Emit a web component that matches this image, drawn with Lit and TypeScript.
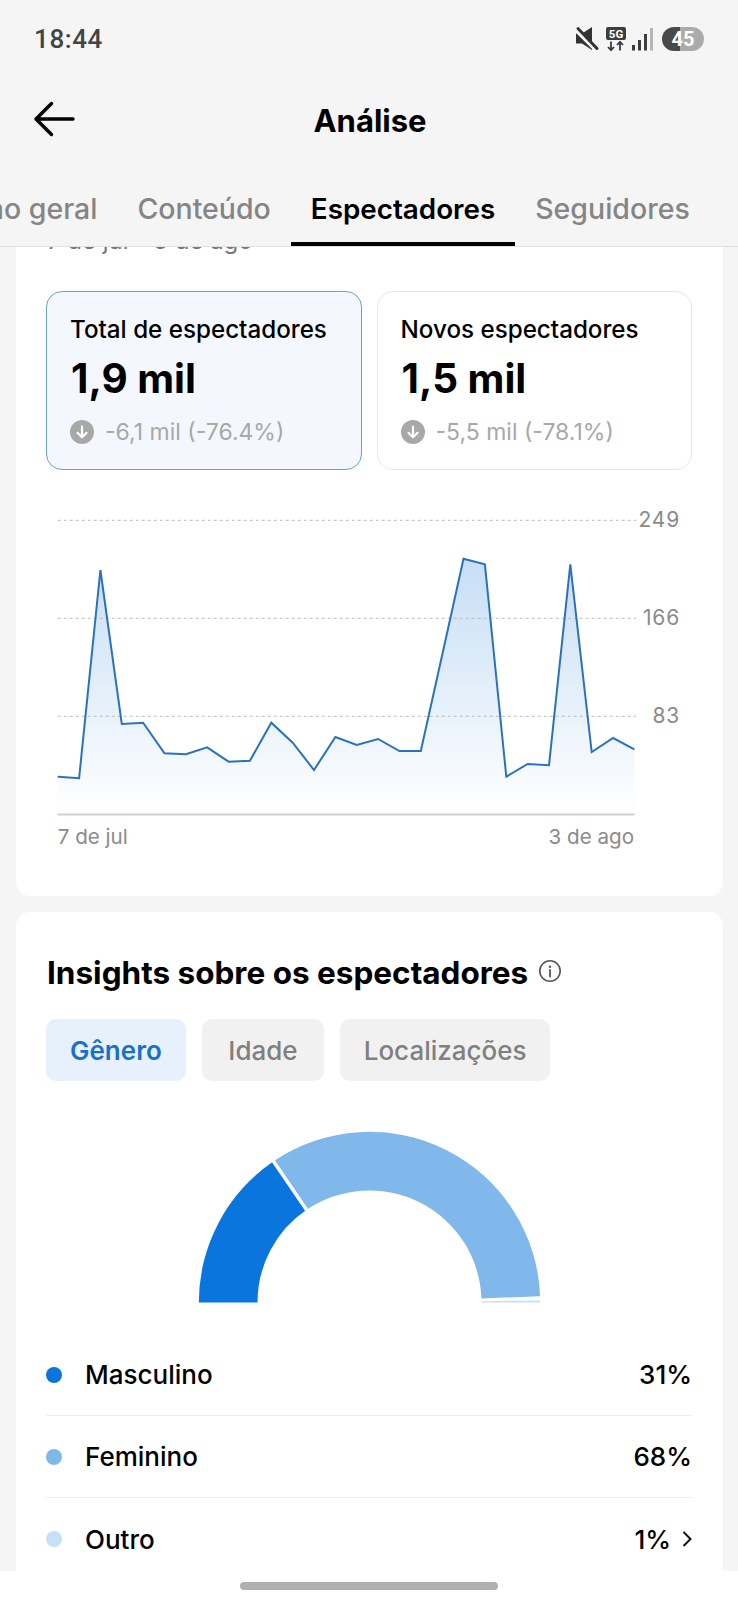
import { LitElement, html, css, svg } from "lit";
import { customElement } from "lit/decorators.js";

const TOP = [776.7, 778.3, 570, 724, 722.7, 753.3, 754.3, 747.3, 761.7, 760.7, 722.7, 742.7, 770, 737, 745, 739, 751, 751, 655, 558.7, 564.3, 776.7, 764, 765.3, 564.3, 752, 738, 749.3];
const X0 = 57.7;
const STEP = 21.36;
const BASE = 814;
const CX = 369.5;
const CY = 1302.5;
const R = 170.7;
const IR = 112;

function pt(r: number, a: number) {
  const t = (a * Math.PI) / 180;
  return `${(CX - r * Math.cos(t)).toFixed(2)} ${(CY - r * Math.sin(t)).toFixed(2)}`;
}
function arc(a: number, b: number) {
  return `M${pt(R, a)} A${R} ${R} 0 0 1 ${pt(R, b)} L${pt(IR, b)} A${IR} ${IR} 0 0 0 ${pt(IR, a)} Z`;
}
function sep(a: number) {
  return `M${pt(IR - 2, a)} L${pt(R + 2, a)}`;
}

@customElement("app-root")
export class AppRoot extends LitElement {
  static styles = css`
    :host {
      display: block;
      width: 738px;
      height: 1600px;
      font-family: Inter, "Noto Sans", sans-serif;
      color: #000;
    }
    .page {
      width: 738px;
      height: 1600px;
      background: #f5f5f5;
      display: flex;
      flex-direction: column;
      overflow: hidden;
    }
    .status {
      height: 78px;
      flex: none;
      display: flex;
      align-items: center;
      justify-content: space-between;
      padding: 0 34px;
      box-sizing: border-box;
    }
    .time {
      font-family: Roboto, sans-serif;
      font-size: 26px;
      font-weight: 500;
      color: #444;
      letter-spacing: 0.6px;
    }
    .sicons { display: block; }
    .header {
      height: 82px;
      flex: none;
      display: flex;
      align-items: center;
      justify-content: center;
      position: relative;
      padding: 2px 0 0 2px;
      box-sizing: border-box;
    }
    .back {
      position: absolute;
      left: 33px;
      top: 23px;
    }
    .title {
      font-size: 31px;
      font-weight: 700;
    }
    .tabs {
      height: 87px;
      flex: none;
      box-sizing: border-box;
      border-bottom: 1px solid #e0e0e0;
      display: flex;
      overflow: hidden;
      margin-left: -75px;
      width: 813px;
    }
    .tab {
      flex: none;
      padding: 15px 20px 0;
      height: 86px;
      box-sizing: border-box;
      display: flex;
      align-items: center;
      font-size: 28.5px;
      font-weight: 500;
      color: #858585;
      border-bottom: 4px solid transparent;
    }
    .tab.on {
      color: #000;
      font-size: 27.8px;
      font-weight: 600;
      border-bottom-color: #000;
    }
    .scroll {
      height: 1324px;
      flex: none;
      overflow: hidden;
      display: flex;
      flex-direction: column;
      gap: 16px;
    }
    .card {
      flex: none;
      width: 707px;
      margin-left: 16px;
      background: #fff;
      box-sizing: border-box;
      padding: 0 31px 0 30px;
      border-radius: 14px;
    }
    .c1 {
      margin-top: -21px;
      height: 670px;
      border-radius: 0 0 14px 14px;
    }
    .range {
      font-size: 24px;
      line-height: 30px;
      color: #777;
      margin-bottom: 35px;
      padding-left: 1px;
    }
    .metrics {
      display: grid;
      grid-template-columns: 1fr 1fr;
      gap: 15px;
    }
    .metric {
      height: 179px;
      box-sizing: border-box;
      border: 1px solid #e8e8e8;
      border-radius: 16px;
      padding: 23px 23px 0;
    }
    .metric.on {
      background: #f4f8fe;
      border-color: #6ba3c4;
    }
    .mlabel {
      font-size: 24.2px;
      line-height: 30px;
      font-weight: 500;
    }
    .mvalue {
      font-size: 40.4px;
      line-height: 48px;
      font-weight: 700;
      margin-top: 10px;
      padding-left: 1px;
    }
    .mdelta {
      display: flex;
      align-items: center;
      gap: 11px;
      font-size: 23px;
      line-height: 30px;
      color: #a8a8a8;
      margin-top: 14px;
    }
    .chart {
      display: block;
      width: 707px;
      height: 360px;
      margin: 30px 0 0 -30px;
    }
    .axis {
      font-size: 20.6px;
      fill: #8a8a8a;
    }
    .ytick {
      font-size: 21px;
      fill: #8a8a8a;
      letter-spacing: 0.8px;
    }
    .c2 {
      padding-top: 41px;
      height: 700px;
    }
    .h2 {
      display: flex;
      align-items: center;
      gap: 10px;
      font-size: 31.5px;
      line-height: 40px;
      font-weight: 700;
      padding-left: 1px;
    }
    .info {
      margin-bottom: 3px;
    }
    .pills {
      display: flex;
      gap: 16px;
      margin-top: 26px;
    }
    .pill {
      height: 62px;
      min-width: 122.5px;
      box-sizing: border-box;
      padding: 0 23.5px;
      display: flex;
      align-items: center;
      justify-content: center;
      border-radius: 10px;
      background: #f1f1f1;
      color: #808080;
      font-size: 26px;
      font-weight: 500;
    }
    .pill.on {
      background: #e6f1fb;
      color: #1a70c8;
      font-weight: 600;
      padding: 0 24px;
    }
    .donut {
      display: block;
      width: 707px;
      height: 200px;
      margin: 29px 0 0 -30px;
    }
    .legend {
      margin-top: 24px;
    }
    .row {
      height: 82px;
      box-sizing: border-box;
      display: flex;
      align-items: center;
      font-size: 26px;
      font-weight: 500;
      border-bottom: 1px solid #eeeeee;
    }
    .row:last-child { border-bottom: 0; }
    .dot {
      width: 16px;
      height: 16px;
      border-radius: 50%;
      margin-right: 23px;
      flex: none;
    }
    .name { flex: 1; }
    .chev { margin-left: 11px; display: block; }
    .nav {
      height: 29px;
      flex: none;
      background: #fff;
      display: flex;
      justify-content: center;
      padding-top: 11px;
      box-sizing: border-box;
    }
    .bar {
      width: 258px;
      height: 8px;
      border-radius: 4px;
      background: #b0b0b0;
    }
  `;

  private downIcon() {
    return html`<svg width="24" height="24" viewBox="0 0 24 24">
      <circle cx="12" cy="12" r="12" fill="#a8a8a8"></circle>
      <path d="M12 6.5V17M7.5 12.8L12 17.2L16.5 12.8" fill="none" stroke="#fff" stroke-width="2.2" stroke-linecap="round" stroke-linejoin="round"></path>
    </svg>`;
  }

  private statusIcons() {
    return html`<svg class="sicons" width="130" height="26" viewBox="574 26 130 26">
      <path d="M576 33.5h6l10-6.5v23l-10-6.5h-6z" fill="#333"></path>
      <path d="M576 29.5L595 48.5" stroke="#f5f5f5" stroke-width="4.6"></path>
      <path d="M578 28.5L597 48.5" stroke="#333" stroke-width="3" stroke-linecap="round"></path>
      <rect x="606" y="27" width="20" height="13" rx="2" fill="#3d3d3d"></rect>
      <text x="616" y="37.6" text-anchor="middle" font-family="Roboto, sans-serif" font-size="11.5" font-weight="700" fill="#fff">5G</text>
      <path d="M611 41.5v8.5M608 47l3 3.2 3-3.2M620 50.5v-8.5M617 45l3-3.2 3 3.2" fill="none" stroke="#3d3d3d" stroke-width="1.8"></path>
      <rect x="632" y="45" width="3" height="5.5" fill="#3d3d3d"></rect>
      <rect x="638" y="40" width="3" height="10.5" fill="#3d3d3d"></rect>
      <rect x="644" y="34" width="3" height="16.5" fill="#3d3d3d"></rect>
      <rect x="650" y="28" width="3" height="22.5" fill="#b5b5b5"></rect>
      <path d="M680 27h-6a12 12 0 0 0 0 24h6z" fill="#4a4a4a"></path>
      <path d="M680 27h12a12 12 0 0 1 0 24h-12z" fill="#ababab"></path>
      <text x="683" y="46" text-anchor="middle" font-family="Roboto, sans-serif" font-size="20" font-weight="700" fill="#fff">45</text>
    </svg>`;
  }

  private chart() {
    const pts = TOP.map((y, i) => `${(X0 + i * STEP).toFixed(1)},${y}`);
    const last = X0 + (TOP.length - 1) * STEP;
    const area = `M${X0},${BASE} L${pts.join(" L")} L${last},${BASE} Z`;
    const line = `M${pts.join(" L")}`;
    const grid = [
      { y: 520.3, t: "249" },
      { y: 618.3, t: "166" },
      { y: 716.3, t: "83" },
    ];
    return html`<svg class="chart" viewBox="16 500 707 360">
      <defs>
        <linearGradient id="fill" x1="0" y1="558" x2="0" y2="814" gradientUnits="userSpaceOnUse">
          <stop offset="0" stop-color="#c6def5"></stop>
          <stop offset="1" stop-color="#ffffff"></stop>
        </linearGradient>
      </defs>
      <path d=${area} fill="url(#fill)"></path>
      ${grid.map(
        (g) => svg`<line x1=${X0} x2="636" y1=${g.y} y2=${g.y} stroke="#bbbbbb" stroke-width="1" stroke-dasharray="3 3"></line>
        <text class="ytick" x="680" y=${g.y + 6.5} text-anchor="end">${g.t}</text>`
      )}
      <line x1=${X0} x2=${last} y1="814.5" y2="814.5" stroke="#cfcfcf" stroke-width="2"></line>
      <path d=${line} fill="none" stroke="#2a72c0" stroke-width="2" stroke-linejoin="miter"></path>
      <text class="axis" x=${X0} y="844">7 de jul</text>
      <text class="axis" x="634" y="844" text-anchor="end">3 de ago</text>
    </svg>`;
  }

  private donut() {
    return html`<svg class="donut" viewBox="16 1110 707 200">
      <path d=${arc(0, 55.8)} fill="#0a75dd"></path>
      <path d=${arc(55.8, 177.9)} fill="#80b8ec"></path>
      <path d=${arc(179.3, 180)} fill="#c7e0f7"></path>
      <path d=${sep(55.8)} stroke="#fff" stroke-width="3.5"></path>
    </svg>`;
  }

  render() {
    const metrics = [
      { l: "Total de espectadores", v: "1,9 mil", d: "-6,1 mil (-76.4%)", on: true },
      { l: "Novos espectadores", v: "1,5 mil", d: "-5,5 mil (-78.1%)", on: false },
    ];
    const legend = [
      { n: "Masculino", p: "31%", c: "#0a75dd" },
      { n: "Feminino", p: "68%", c: "#80b8ec" },
      { n: "Outro", p: "1%", c: "#c7e0f7", more: true },
    ];
    return html`<div class="page">
      <div class="status">
        <span class="time">18:44</span>
        ${this.statusIcons()}
      </div>
      <div class="header">
        <svg class="back" width="42" height="36" viewBox="0 0 42 36">
          <path d="M40 18H3M18.5 2.5L3 18L18.5 33.5" fill="none" stroke="#000" stroke-width="3.4" stroke-linecap="round" stroke-linejoin="round"></path>
        </svg>
        <span class="title">Análise</span>
      </div>
      <div class="tabs">
        <div class="tab">Visão geral</div>
        <div class="tab">Conteúdo</div>
        <div class="tab on">Espectadores</div>
        <div class="tab">Seguidores</div>
      </div>
      <div class="scroll">
        <section class="card c1">
          <div class="range">7 de jul - 3 de ago</div>
          <div class="metrics">
            ${metrics.map(
              (m) => html`<div class="metric ${m.on ? "on" : ""}">
                <div class="mlabel">${m.l}</div>
                <div class="mvalue">${m.v}</div>
                <div class="mdelta">${this.downIcon()}<span>${m.d}</span></div>
              </div>`
            )}
          </div>
          ${this.chart()}
        </section>
        <section class="card c2">
          <div class="h2">
            <span>Insights sobre os espectadores</span>
            <svg class="info" width="24" height="24" viewBox="0 0 24 24">
              <circle cx="12" cy="11" r="10.2" fill="none" stroke="#555" stroke-width="1.6"></circle>
              <circle cx="12" cy="6.8" r="1.2" fill="#555"></circle>
              <path d="M12 10v6.5" stroke="#555" stroke-width="1.8" stroke-linecap="round"></path>
            </svg>
          </div>
          <div class="pills">
            <div class="pill on">Gênero</div>
            <div class="pill">Idade</div>
            <div class="pill">Localizações</div>
          </div>
          ${this.donut()}
          <div class="legend">
            ${legend.map(
              (r) => html`<div class="row">
                <span class="dot" style="background:${r.c}"></span>
                <span class="name">${r.n}</span>
                <span>${r.p}</span>
                ${r.more
                  ? html`<svg class="chev" width="10" height="18" viewBox="0 0 10 18"><path d="M1.5 2L8.5 9L1.5 16" fill="none" stroke="#111" stroke-width="2"></path></svg>`
                  : ""}
              </div>`
            )}
          </div>
        </section>
      </div>
      <div class="nav"><div class="bar"></div></div>
    </div>`;
  }
}
